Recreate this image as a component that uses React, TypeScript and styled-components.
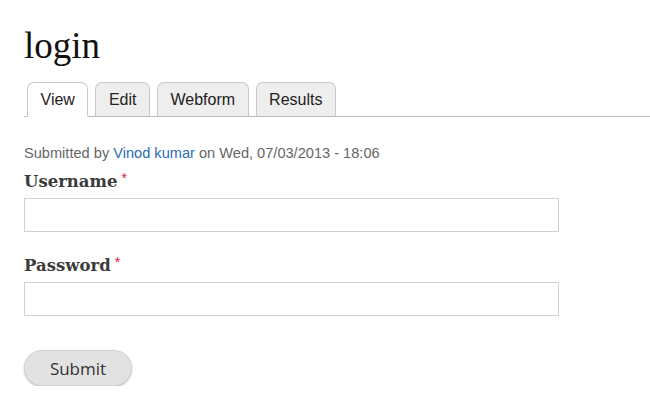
import React from "react";
import styled, { createGlobalStyle } from "styled-components";

const GlobalStyle = createGlobalStyle`
  body {
    margin: 0;
    background: #fff;
    font-family: "Liberation Sans", Arial, sans-serif;
  }
`;

const Page = styled.div`
  padding: 0 0 0 24px;
`;

const Title = styled.h1`
  margin: 0;
  padding-top: 26px;
  font-family: "Liberation Serif", "Times New Roman", serif;
  font-weight: normal;
  font-size: 37px;
  line-height: 40px;
  color: #111;
`;

const Tabs = styled.ul`
  display: flex;
  gap: 7px;
  margin: 16px 0 0;
  padding: 0 0 0 3px;
  list-style: none;
  border-bottom: 1px solid #bbb;
`;

const Tab = styled.li<{ $active?: boolean }>`
  height: 33px;
  padding: 0 12.5px;
  display: flex;
  align-items: center;
  font-size: 16px;
  color: #222;
  background: ${(p) => (p.$active ? "#fff" : "#eee")};
  border: 1px solid #c8c8c8;
  border-bottom: ${(p) => (p.$active ? "1px solid #fff" : "none")};
  margin-bottom: ${(p) => (p.$active ? "-1px" : "0")};
  border-radius: 7px 7px 0 0;
`;

const Meta = styled.div`
  margin-top: 28px;
  font-size: 14.6px;
  line-height: 17px;
  color: #666;

  a {
    color: #2a6db4;
    text-decoration: none;
  }
`;

const Field = styled.div<{ $gap?: number }>`
  margin-top: ${(p) => p.$gap ?? 0}px;
  display: flex;
  flex-direction: column;
`;

const Label = styled.label`
  font-family: "DejaVu Serif", Georgia, serif;
  font-weight: bold;
  font-size: 16.5px;
  line-height: 22px;
  color: #3b3b3b;
  margin-bottom: 5px;
`;

const Required = styled.span`
  position: relative;
  top: -4px;
  color: #e0183a;
  font-family: "Liberation Sans", Arial, sans-serif;
  font-weight: normal;
  font-size: 14px;
  line-height: 1;
  margin-left: 4px;
`;

const Input = styled.input`
  box-sizing: border-box;
  width: 535px;
  height: 34px;
  margin: 0;
  border: 1px solid #d2d2d2;
  background: #fff;
`;

const SubmitButton = styled.button`
  margin-top: 34px;
  width: 108px;
  height: 36px;
  border: 1px solid #d4d4d4;
  border-radius: 18px;
  background: #e2e2e2;
  box-shadow: 0 1px 2px rgba(0, 0, 0, 0.25);
  font-family: "Open Sans", "Noto Sans", sans-serif;
  font-size: 17px;
  color: #333;
`;

export default function App() {
  return (
    <>
      <GlobalStyle />
      <Page>
        <Title>login</Title>
        <Tabs>
          <Tab $active>View</Tab>
          <Tab>Edit</Tab>
          <Tab>Webform</Tab>
          <Tab>Results</Tab>
        </Tabs>
        <Meta>
          Submitted by <a href="#">Vinod kumar</a> on Wed, 07/03/2013 - 18:06
        </Meta>
        <Field $gap={9}>
          <Label>
            Username<Required>*</Required>
          </Label>
          <Input type="text" />
        </Field>
        <Field $gap={23}>
          <Label>
            Password<Required>*</Required>
          </Label>
          <Input type="password" />
        </Field>
        <SubmitButton>Submit</SubmitButton>
      </Page>
    </>
  );
}
